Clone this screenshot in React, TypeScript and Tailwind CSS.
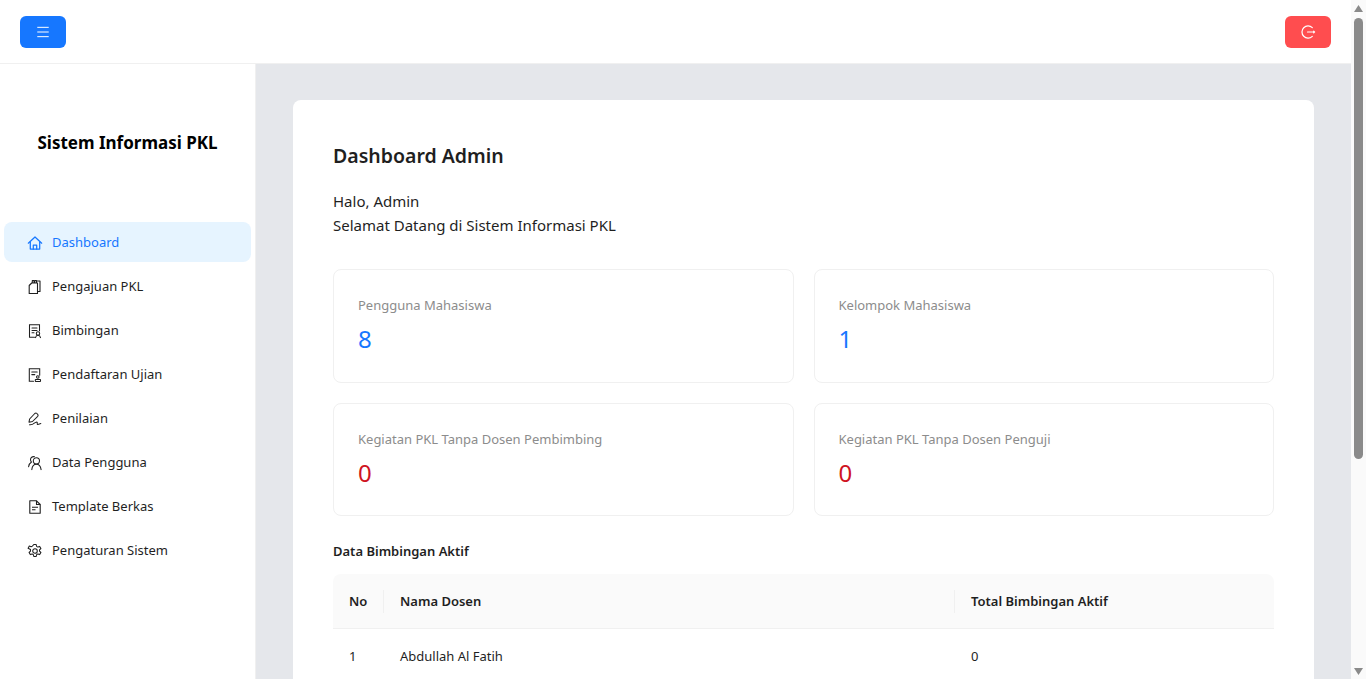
import React from "react";
import { Menu } from "lucide-react";

const F = { fontFamily: '"Noto Sans", sans-serif' };

function Home() {
  return (
    <svg viewBox="0 0 16 16" width="16" height="16" fill="none" stroke="currentColor" strokeWidth="1.25" strokeLinejoin="round" strokeLinecap="round">
      <path d="M1.300 8.200 8 2l6.700 6.200" />
      <path d="M3.300 7v7h9.400V7" />
      <path d="M6.300 14V10h3.400v4" />
    </svg>
  );
}
function Copy() {
  return (
    <svg viewBox="0 0 16 16" width="16" height="16" fill="none" stroke="currentColor" strokeWidth="1.1" strokeLinejoin="round">
      <path d="M2.200 6.500 4.700 4h5.800v10.500H2.200z" />
      <path d="M5.300 4V1.500h1.700V4M7.800 4V1.500h1.700V4M9.500 2h3.500v10.500h-2.500" />
    </svg>
  );
}
function Guide() {
  return (
    <svg viewBox="0 0 16 16" width="16" height="16" fill="none" stroke="currentColor" strokeWidth="1.05" strokeLinecap="round">
      <path d="M7.500 14.200H2.500V1.800h10v6" />
      <path d="M5 5h5M5 7.400h5M5 9.800h2" />
      <circle cx="11" cy="10.400" r="1.700" />
      <path d="M8.500 14.600c.3-1.500 1.200-2.300 2.500-2.300s2.200.8 2.500 2.300" />
    </svg>
  );
}
function Exam() {
  return (
    <svg viewBox="0 0 16 16" width="16" height="16" fill="none" stroke="currentColor" strokeWidth="1.05" strokeLinecap="round">
      <path d="M6.500 14.200H2.300V1.800h10.400v6.400" />
      <path d="M4.800 5h5.400M4.800 7.600h3" />
      <circle cx="10.800" cy="10" r="1.300" />
      <rect x="8.300" y="12.400" width="5.200" height="2" rx=".4" />
    </svg>
  );
}
function Pen() {
  return (
    <svg viewBox="0 0 16 16" width="16" height="16" fill="none" stroke="currentColor" strokeWidth="1.05" strokeLinecap="round" strokeLinejoin="round">
      <path d="M2 11.200 2.600 8 7.800 2.500c.7-.6 1.500-.6 2.100 0l.8.8c.6.700.5 1.400 0 2L5.500 10.500 2 11.200z" />
      <path d="M2.500 13.800c1.800.2 3.500-.4 4.800-1.600 1.200-1.100 2.700-1.500 3-.6.2.8-.5 1.500.3 1.800.9.300 2-.7 3.200-.9" />
    </svg>
  );
}
function Users() {
  return (
    <svg viewBox="0 0 16 16" width="16" height="16" fill="none" stroke="currentColor" strokeWidth="1.05" strokeLinecap="round">
      <circle cx="9.400" cy="5.800" r="3.100" />
      <path d="M4.800 14.600c.3-3 2.100-5.400 4.600-5.400s4.300 2.400 4.700 5.400" />
      <path d="M7.500 1.800c-2.200-.6-4 .7-4 2.900 0 1 .5 1.800 1 2.300C3 7.900 1.900 9.600 1.600 11.800" />
    </svg>
  );
}
function FileT() {
  return (
    <svg viewBox="0 0 16 16" width="16" height="16" fill="none" stroke="currentColor" strokeWidth="1.1" strokeLinejoin="round">
      <path d="M2.800 1.800h6.700l3.700 3.700v8.700H2.800z" />
      <path d="M9.500 1.800v3.700h3.700" />
      <path d="M5 8.300h6M5 10.700h3.500" />
    </svg>
  );
}
function Gear() {
  return (
    <svg viewBox="0 0 16 16" width="16" height="16" fill="none" stroke="currentColor" strokeWidth="1.05" strokeLinejoin="round">
      <circle cx="8" cy="8" r="2.300" />
      <path d="M6.800 1.500h2.400l.4 1.900 1.300.7 1.800-.7 1.200 2.100-1.400 1.300v1.400l1.400 1.300-1.200 2.100-1.800-.7-1.300.7-.4 1.900H6.800l-.4-1.900-1.300-.7-1.800.7-1.200-2.100 1.400-1.300V6.500L1.100 5.200l1.200-2.100 1.800.7 1.300-.7z" />
    </svg>
  );
}

const nav = [
  { label: "Dashboard", Icon: Home, active: true },
  { label: "Pengajuan PKL", Icon: Copy },
  { label: "Bimbingan", Icon: Guide },
  { label: "Pendaftaran Ujian", Icon: Exam },
  { label: "Penilaian", Icon: Pen },
  { label: "Data Pengguna", Icon: Users },
  { label: "Template Berkas", Icon: FileT },
  { label: "Pengaturan Sistem", Icon: Gear },
];

function Stat({ label, value, color }: { label: string; value: string; color: string }) {
  return (
    <div className="h-[113.5px] rounded-lg border border-[#f0f0f0] bg-white px-6 pt-[24px]">
      <div className="text-[13px] leading-[22px] text-[#8c8c8c]">{label}</div>
      <div className={`mt-[7px] text-[24px] leading-[32px] ${color}`}>{value}</div>
    </div>
  );
}

function Scrollbar() {
  return (
    <div className="flex h-full w-[15px] shrink-0 flex-col items-center bg-[#fafafa]">
      <svg viewBox="0 0 9 7" width="9" height="7" className="mt-[5px] shrink-0" fill="#8a8a8a">
        <path d="M4.500 0 9 7H0z" />
      </svg>
      <div className="mt-[6px] h-[441px] w-[9px] shrink-0 rounded-[5px] bg-[#8a8a8a]" />
      <div className="flex-1" />
      <svg viewBox="0 0 9 7" width="9" height="7" className="mb-[4px] shrink-0" fill="#8a8a8a">
        <path d="M0 0h9L4.500 7z" />
      </svg>
    </div>
  );
}

export default function App() {
  return (
    <div style={F} className="flex h-screen overflow-hidden bg-white text-[#1f1f1f]">
      <div className="flex min-w-0 flex-1 flex-col overflow-hidden">
        <header className="flex h-[64px] shrink-0 items-center justify-between border-b border-[#f0f0f0] bg-white px-5">
          <button className="flex h-8 w-[46px] items-center justify-center rounded-md bg-[#1677ff] text-white">
            <Menu size={16} strokeWidth={1.5} />
          </button>
          <button className="flex h-8 w-[46px] items-center justify-center rounded-md bg-[#ff4d4f] text-white">
            <svg viewBox="0 0 16 16" width="16" height="16" fill="none" stroke="currentColor" strokeWidth="1.2" strokeLinecap="round">
              <path d="M12.300 3.600A6.100 6.100 0 1 0 12.300 12.400" />
              <path d="M7.500 8H14.500M13.700 7.200 14.500 8l-.8.800" />
            </svg>
          </button>
        </header>
        <div className="flex min-h-0 flex-1">
          <aside className="w-[256px] shrink-0 border-r border-[#f0f0f0] bg-white">
            <div className="flex h-[158px] items-center justify-center text-[17px] font-bold text-black">
              Sistem Informasi PKL
            </div>
            <nav className="flex flex-col gap-1 px-1">
              {nav.map(({ label, Icon, active }) => (
                <div
                  key={label}
                  className={`flex h-10 items-center gap-[9px] rounded-lg pl-[23px] pt-[2px] text-[13px] ${
                    active ? "bg-[#e6f4ff] text-[#1677ff]" : "text-[#1f1f1f]"
                  }`}
                >
                  <Icon />
                  <span>{label}</span>
                </div>
              ))}
            </nav>
          </aside>
          <main className="min-w-0 flex-1 overflow-hidden bg-[#e5e7eb] px-[37px] pt-9">
            <div className="rounded-lg bg-white px-10 pb-6 pt-10">
              <h1 className="text-[19.5px] font-semibold leading-[32px]">Dashboard Admin</h1>
              <p className="mt-[17px] text-[15px] leading-6">
                Halo, Admin
                <br />
                Selamat Datang di Sistem Informasi PKL
              </p>
              <div className="mt-[32px] grid grid-cols-2 gap-5">
                <Stat label="Pengguna Mahasiswa" value="8" color="text-[#1677ff]" />
                <Stat label="Kelompok Mahasiswa" value="1" color="text-[#1677ff]" />
                <Stat label="Kegiatan PKL Tanpa Dosen Pembimbing" value="0" color="text-[#cf1322]" />
                <Stat label="Kegiatan PKL Tanpa Dosen Penguji" value="0" color="text-[#cf1322]" />
              </div>
              <h2 className="mt-6 text-[13px] font-semibold leading-[22px]">Data Bimbingan Aktif</h2>
              <div className="mt-3 text-[13px]">
                <div className="flex h-[55px] items-center rounded-t-lg border-b border-[#f0f0f0] bg-[#fafafa] font-semibold">
                  <div className="w-[51px] border-r border-[#f0f0f0] pl-4 leading-[23px]">No</div>
                  <div className="flex-1 border-r border-[#f0f0f0] pl-4 leading-[23px]">Nama Dosen</div>
                  <div className="w-[319px] pl-4 leading-[23px]">Total Bimbingan Aktif</div>
                </div>
                <div className="flex h-[55px] items-center border-b border-[#f0f0f0] pt-[2px]">
                  <div className="w-[51px] pl-4">1</div>
                  <div className="flex-1 pl-4">Abdullah Al Fatih</div>
                  <div className="w-[319px] pl-4">0</div>
                </div>
              </div>
            </div>
          </main>
        </div>
      </div>
      <Scrollbar />
    </div>
  );
}
